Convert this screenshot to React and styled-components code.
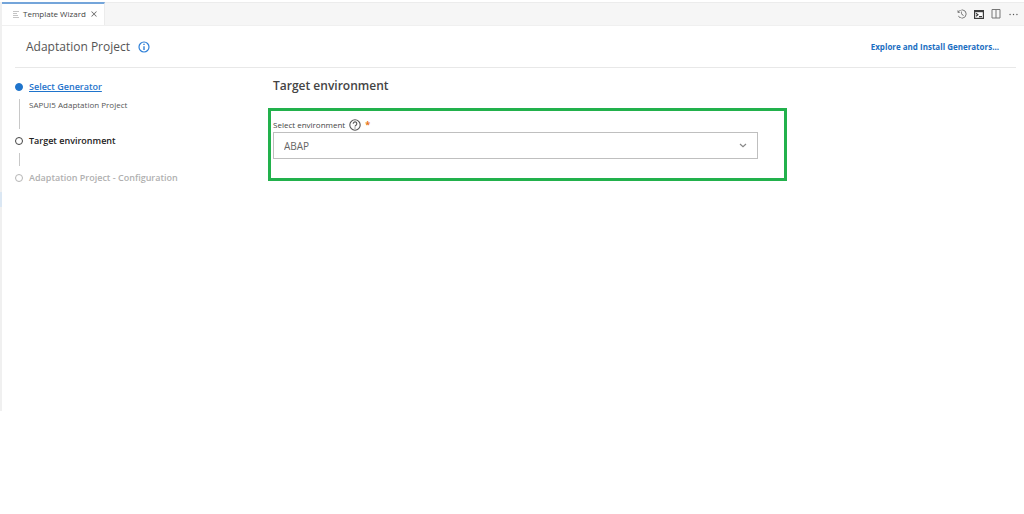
import React from "react";
import styled, { createGlobalStyle } from "styled-components";
import { VscClose, VscEllipsis, VscHistory } from "react-icons/vsc";

const steps = [
  { title: "Select Generator", detail: "SAPUI5 Adaptation Project", state: "done" },
  { title: "Target environment", state: "current" },
  { title: "Adaptation Project - Configuration", state: "pending" },
];

const App = () => {
  return (
    <>
      <GlobalStyle />
      <Workbench>
        <SideEdge>
          <EdgeMark />
        </SideEdge>
        <Editor>
          <TabBar>
            <Tab>
              <LinesIcon />
              <TabName>Template Wizard</TabName>
              <IconButton aria-label="Close tab">
                <VscClose size={10} />
              </IconButton>
            </Tab>
            <Actions>
              <IconButton aria-label="History">
                <VscHistory size={10} />
              </IconButton>
              <IconButton aria-label="Terminal">
                <TerminalIcon />
              </IconButton>
              <IconButton aria-label="Split editor">
                <SplitIcon />
              </IconButton>
              <IconButton aria-label="More actions">
                <VscEllipsis size={11} />
              </IconButton>
            </Actions>
          </TabBar>
          <Header>
            <HeaderTitle>Adaptation Project</HeaderTitle>
            <IconButton aria-label="Information">
              <InfoIcon />
            </IconButton>
            <ExploreLink href="#generators">Explore and Install Generators...</ExploreLink>
          </Header>
          <Body>
            <Steps>
              {steps.map((step) => (
                <Step key={step.title}>
                  <Rail>
                    <Dot $state={step.state} />
                    {step.state !== "pending" && <Line />}
                  </Rail>
                  <StepText $state={step.state}>
                    {step.state === "done" ? (
                      <StepLink href="#select-generator">{step.title}</StepLink>
                    ) : (
                      <StepTitle $state={step.state}>{step.title}</StepTitle>
                    )}
                    {step.detail && <StepDetail>{step.detail}</StepDetail>}
                  </StepText>
                </Step>
              ))}
            </Steps>
            <Main>
              <Heading>Target environment</Heading>
              <Highlight>
                <LabelRow>
                  <Label htmlFor="environment">Select environment</Label>
                  <HelpIcon />
                  <Required>*</Required>
                </LabelRow>
                <SelectWrapper>
                  <Select id="environment" defaultValue="ABAP" required>
                    <option>ABAP</option>
                    <option>Cloud Foundry</option>
                  </Select>
                  <ChevronIcon />
                </SelectWrapper>
              </Highlight>
            </Main>
          </Body>
        </Editor>
      </Workbench>
    </>
  );
};

export default App;

// Icons
const LinesIcon = () => (
  <svg width="7" height="8" viewBox="0 0 7 8" stroke="#b5b5b5" aria-hidden="true">
    <path d="M0 1.5h6M0 3.5h4M0 5.5h5M0 7.5h6" strokeWidth="0.8" />
  </svg>
);

const TerminalIcon = () => (
  <svg width="10" height="9" viewBox="0 0 10 9" fill="none" aria-hidden="true">
    <rect x="0.6" y="0.6" width="8.8" height="7.8" fill="#fff" stroke="#3c3c3c" strokeWidth="1.2" />
    <path d="M0 1.2h10" stroke="#3c3c3c" strokeWidth="2" />
    <path d="M2 3.2l2 1.5-2 1.6M5 6.6h3" stroke="#3c3c3c" strokeWidth="1.1" />
  </svg>
);

const SplitIcon = () => (
  <svg width="10" height="10" viewBox="0 0 10 10" fill="none" stroke="#777" aria-hidden="true">
    <path d="M1 0.5h8v8.5H1zM5 0.5v8.5" strokeWidth="1" />
  </svg>
);

const InfoIcon = () => (
  <svg width="12" height="12" viewBox="0 0 12 12" fill="none" stroke="#2f80d8" aria-hidden="true">
    <circle cx="6" cy="6" r="5" strokeWidth="1.2" />
    <path d="M6 2.8v1.3M6 5.2v3.8" strokeWidth="1.4" />
  </svg>
);

const HelpIcon = () => (
  <svg width="12" height="12" viewBox="0 0 12 12" fill="none" stroke="#555" role="img" aria-label="Help">
    <circle cx="6" cy="6" r="5.2" strokeWidth="1.1" />
    <path d="M4.2 4.8a1.8 1.8 0 1 1 2.8 1.4C6.3 6.7 6 6.9 6 7.6M6 8.4v1" strokeWidth="1.1" />
  </svg>
);

const ChevronIcon = () => (
  <Chevron width="8" height="5" viewBox="0 0 8 5" fill="none" stroke="#888" aria-hidden="true">
    <path d="M1 1l3 2.6L7 1" strokeWidth="1.2" />
  </Chevron>
);

// Styled Components
const GlobalStyle = createGlobalStyle`
  * {
    box-sizing: border-box;
  }

  body {
    margin: 0;
    background: #fff;
    color: #444;
    font-family: "Open Sans", "Noto Sans", sans-serif;
    font-size: 9px;
  }
`;

const Workbench = styled.div`
  display: flex;
  min-height: 80vh;
  padding-top: 2px;
`;

const SideEdge = styled.div`
  flex: none;
  width: 2px;
  padding-top: 190px;
  background: #f0f0f0;
`;

const EdgeMark = styled.div`
  height: 15px;
  background: #dbe7f3;
`;

const Editor = styled.div`
  flex: 1;
  min-width: 0;
`;

const TabBar = styled.div`
  display: flex;
  justify-content: space-between;
  height: 24px;
  background: #f6f6f6;
  border-top: 1px solid #ececec;
  border-bottom: 1px solid #f0f0f0;
`;

const Tab = styled.div`
  display: flex;
  align-items: center;
  gap: 3px;
  margin-top: -1px;
  padding: 0 5px 1px 11px;
  background: #fff;
  border-top: 2px solid #74a5da;
  border-right: 1px solid #ececec;
`;

const TabName = styled.span`
  font-size: 8px;
  line-height: 12px;
  color: #444;
`;

const IconButton = styled.button`
  display: flex;
  padding: 0;
  border: none;
  background: none;
  color: #555;
  cursor: pointer;
`;

const Actions = styled.div`
  display: flex;
  align-items: center;
  gap: 7px;
  padding-right: 5px;
`;

const Header = styled.header`
  display: flex;
  align-items: center;
  gap: 8px;
  height: 42px;
  margin: 0 8px 0 13px;
  padding: 0 17px 0 11px;
  border-bottom: 1px solid #e8e8e8;
`;

const HeaderTitle = styled.h1`
  margin: 0;
  font-size: 12px;
  font-weight: 400;
  line-height: 16px;
  color: #555;
`;

const ExploreLink = styled.a`
  margin-left: auto;
  font-size: 8px;
  font-weight: 700;
  line-height: 12px;
  color: #1b6ec2;
  text-decoration: none;
`;

const Body = styled.div`
  display: flex;
  padding: 10px 8px 0 13px;
`;

const Steps = styled.ol`
  flex: none;
  width: 253px;
  margin: 0;
  padding: 3px 0 0;
  list-style: none;
`;

const Step = styled.li`
  display: flex;
  gap: 6px;
`;

const Rail = styled.div`
  display: flex;
  flex-direction: column;
  align-items: center;
  width: 8px;
  padding-top: 2px;
`;

const dotColors = { done: "#1f74cc", current: "#444", pending: "#b5b5b5" };

const Dot = styled.span`
  flex: none;
  width: 8px;
  height: 8px;
  border: 1px solid ${({ $state }) => dotColors[$state]};
  border-radius: 50%;
  background: ${({ $state }) => ($state === "done" ? dotColors.done : "#fff")};
`;

const Line = styled.span`
  flex: 1;
  width: 1px;
  margin: 8px 0 6px;
  background: #c8c8c8;
`;

const StepText = styled.div`
  min-height: ${({ $state }) => ($state === "done" ? "54px" : "37px")};
`;

const StepTitle = styled.span`
  display: block;
  font-size: 9px;
  font-weight: 600;
  line-height: 12px;
  color: ${({ $state }) => ($state === "pending" ? "#b0b0b0" : "#222")};
`;

const StepLink = styled.a`
  display: block;
  font-size: 9px;
  font-weight: 600;
  line-height: 12px;
  color: #1f74cc;
  text-decoration: underline;
`;

const StepDetail = styled.div`
  margin-top: 6px;
  font-size: 8px;
  line-height: 12px;
  color: #555;
`;

const Main = styled.main`
  flex: 1;
  min-width: 0;
`;

const Heading = styled.h2`
  margin: 0 0 14px;
  padding-left: 5px;
  font-size: 12px;
  font-weight: 600;
  line-height: 16px;
  color: #444;
`;

const Highlight = styled.section`
  max-width: 519px;
  padding: 8px 26px 19px 2px;
  border: 3px solid #22b14c;
`;

const LabelRow = styled.div`
  display: flex;
  align-items: center;
  gap: 4px;
  height: 12px;
  margin-bottom: 1px;
`;

const Label = styled.label`
  font-size: 8px;
  line-height: 12px;
  color: #444;
`;

const Required = styled.span`
  font-size: 9px;
  font-weight: 700;
  line-height: 12px;
  color: #e8761a;
`;

const SelectWrapper = styled.div`
  position: relative;
`;

const Select = styled.select`
  display: block;
  width: 100%;
  height: 27px;
  padding: 0 24px 0 10px;
  appearance: none;
  border: 1px solid #bfbfbf;
  border-radius: 0;
  background: #fff;
  color: #666;
  font-family: inherit;
  font-size: 10px;
`;

const Chevron = styled.svg`
  position: absolute;
  top: 11px;
  right: 11px;
  pointer-events: none;
`;
